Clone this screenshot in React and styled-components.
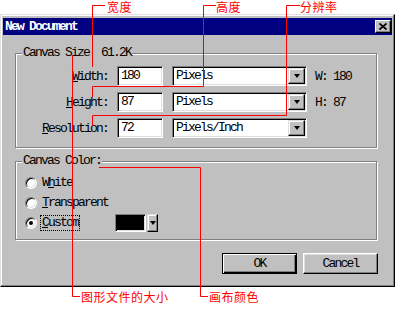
import styled, { createGlobalStyle } from 'styled-components';

const GlobalStyle = createGlobalStyle`
  html, body {
    margin: 0;
    padding: 0;
    background: #fff;
  }
`;

const Page = styled.div`
  position: relative;
  width: 396px;
  height: 309px;
  padding-top: 14px;
  box-sizing: border-box;
  overflow: hidden;
  font-family: "Liberation Mono", "Courier New", monospace;
  font-size: 13px;
  letter-spacing: -1.8px;
  color: #000;
`;

const Window = styled.div`
  width: 395px;
  height: 273px;
  box-sizing: border-box;
  background: #c0c0c0;
  border: 1px solid;
  border-color: #dfdfdf #000 #000 #dfdfdf;
  box-shadow: inset -1px -1px 0 #808080, inset 1px 1px 0 #fff;
  padding: 2px;
`;

const TitleBar = styled.div`
  margin-top: 1px;
  height: 17px;
  background: #000080;
  display: flex;
  align-items: center;
  justify-content: space-between;
  padding: 0 1px 0 2px;
  color: #fff;
  font-weight: bold;
`;

const CloseButton = styled.div`
  width: 16px;
  height: 13px;
  box-sizing: border-box;
  background: #c0c0c0;
  border: 1px solid;
  border-color: #fff #000 #000 #fff;
  box-shadow: inset -1px -1px 0 #808080;
  display: flex;
  align-items: center;
  justify-content: center;
`;

const Content = styled.div`
  padding: 18px 0 0 12px;
  display: flex;
  flex-direction: column;
`;

const GroupBox = styled.div`
  width: 362px;
  height: ${p => p.$h}px;
  margin-top: ${p => p.$mt || 0}px;
  box-sizing: border-box;
  border: 1px solid #808080;
  box-shadow: 1px 1px 0 #fff, inset 1px 1px 0 #fff;
  display: flex;
  flex-direction: column;
`;

const Legend = styled.div`
  align-self: flex-start;
  margin: -8px 0 0 6px;
  padding: 0 1px;
  background: #c0c0c0;
  line-height: 14px;
  white-space: pre;
`;

const FieldGrid = styled.div`
  display: grid;
  grid-template-columns: 92px 46px 135px auto;
  column-gap: 9px;
  row-gap: 6px;
  margin-top: 6px;
  align-items: center;
`;

const Label = styled.div`
  text-align: right;
  white-space: pre;
`;

const U = styled.span`
  text-decoration: underline;
`;

const Sunken = styled.div`
  height: ${p => p.$h || 20}px;
  box-sizing: border-box;
  background: ${p => p.$bg || '#fff'};
  border: 1px solid;
  border-color: #808080 #fff #fff #808080;
  box-shadow: inset 1px 1px 0 #000, inset -1px -1px 0 #dfdfdf;
  display: flex;
  align-items: stretch;
`;

const FieldText = styled.div`
  flex: 1;
  padding-left: 3px;
  line-height: 18px;
`;

const ArrowButton = styled.div`
  width: ${p => p.$w || 17}px;
  margin: 1px 1px 1px 0;
  box-sizing: border-box;
  background: #c0c0c0;
  border: 1px solid;
  border-color: #dfdfdf #000 #000 #dfdfdf;
  box-shadow: inset -1px -1px 0 #808080, inset 1px 1px 0 #fff;
  display: flex;
  align-items: center;
  justify-content: center;
  &::after {
    content: '';
    border-left: 3.5px solid transparent;
    border-right: 3.5px solid transparent;
    border-top: 4px solid #000;
  }
`;

const Info = styled.div`
  margin-left: -1px;
  white-space: pre;
`;

const RadioList = styled.div`
  display: flex;
  flex-direction: column;
  margin: 5px 0 0 9px;
`;

const RadioRow = styled.div`
  height: 20px;
  display: flex;
  align-items: center;
`;

const Radio = styled.span`
  width: 12px;
  height: 12px;
  box-sizing: border-box;
  border-radius: 50%;
  background: #fff;
  border: 1px solid;
  border-color: #808080 #fff #fff #808080;
  box-shadow: inset 1px 1px 0 #000, inset -1px -1px 0 #dfdfdf;
  display: flex;
  align-items: center;
  justify-content: center;
  &::after {
    content: '';
    width: 4px;
    height: 4px;
    border-radius: 50%;
    background: #000;
    display: ${p => (p.$checked ? 'block' : 'none')};
  }
`;

const RadioLabel = styled.span`
  margin-left: 3px;
  padding: 0 1px;
  line-height: 14px;
  border: 1px dotted ${p => (p.$focus ? '#000' : 'transparent')};
`;

const ColorPicker = styled.div`
  margin-left: 35px;
  display: flex;
  height: 18px;
`;

const Swatch = styled(Sunken)`
  width: 31px;
  background: #000;
`;

const SmallArrow = styled(ArrowButton)`
  margin: 0 0 0 1px;
`;

const ButtonRow = styled.div`
  width: 363px;
  margin-top: 13px;
  display: flex;
  justify-content: flex-end;
  gap: 6px;
`;

const Button = styled.div`
  width: 75px;
  height: 21px;
  box-sizing: border-box;
  display: flex;
  align-items: center;
  justify-content: center;
  background: #c0c0c0;
  border: 1px solid;
  border-color: ${p => (p.$default ? '#000' : '#fff #000 #000 #fff')};
  box-shadow: ${p =>
    p.$default
      ? 'inset 1px 1px 0 #fff, inset -1px -1px 0 #000, inset -2px -2px 0 #808080'
      : 'inset -1px -1px 0 #808080, inset 1px 1px 0 #dfdfdf'};
`;

const Overlay = styled.svg`
  position: absolute;
  left: 0;
  top: 0;
  width: 396px;
  height: 309px;
  pointer-events: none;
`;

const Note = styled.div`
  position: absolute;
  left: ${p => p.$x}px;
  top: ${p => p.$y}px;
  font-family: "Noto Sans CJK SC", sans-serif;
  font-size: 12px;
  line-height: 13px;
  letter-spacing: 0.5px;
  color: #f00;
  white-space: nowrap;
`;

const leaders = [
  '105,5.5 92.5,5.5 92.5,67',
  '216,5.5 203.5,5.5 203.5,86.5 92.5,86.5 92.5,97',
  '300,5.5 286.5,5.5 286.5,115.5 92.5,115.5 92.5,126',
  '72.5,55 72.5,296.5 80,296.5',
  '99,167.5 200.5,167.5 200.5,296.5 208,296.5',
];

const notes = [
  { x: 107, y: 0, text: '宽度' },
  { x: 216, y: 0, text: '高度' },
  { x: 300, y: 0, text: '分辨率' },
  { x: 81, y: 290, text: '图形文件的大小' },
  { x: 209, y: 290, text: '画布颜色' },
];

const Field = ({ value }) => (
  <Sunken>
    <FieldText>{value}</FieldText>
  </Sunken>
);

const Combo = ({ value }) => (
  <Sunken>
    <FieldText>{value}</FieldText>
    <ArrowButton />
  </Sunken>
);

const App = () => {
  return (
    <Page>
      <GlobalStyle />
      <Window>
        <TitleBar>
          <span>New Document</span>
          <CloseButton>
            <svg width="8" height="7" viewBox="0 0 8 7">
              <path d="M0.5 0.5 L7.5 6.5 M7.5 0.5 L0.5 6.5" stroke="#000" strokeWidth="1.7" />
            </svg>
          </CloseButton>
        </TitleBar>
        <Content>
          <GroupBox $h={95}>
            <Legend>Canvas Size  61.2K</Legend>
            <FieldGrid>
              <Label><U>W</U>idth:</Label>
              <Field value="180" />
              <Combo value="Pixels" />
              <Info>W: 180</Info>

              <Label><U>H</U>eight:</Label>
              <Field value="87" />
              <Combo value="Pixels" />
              <Info>H: 87</Info>

              <Label><U>R</U>esolution:</Label>
              <Field value="72" />
              <Combo value="Pixels/Inch" />
              <Info />
            </FieldGrid>
          </GroupBox>

          <GroupBox $h={79} $mt={13}>
            <Legend>Canvas Color:</Legend>
            <RadioList>
              <RadioRow>
                <Radio />
                <RadioLabel>W<U>h</U>ite</RadioLabel>
              </RadioRow>
              <RadioRow>
                <Radio />
                <RadioLabel><U>T</U>ransparent</RadioLabel>
              </RadioRow>
              <RadioRow>
                <Radio $checked />
                <RadioLabel $focus><U>C</U>ustom</RadioLabel>
                <ColorPicker>
                  <Swatch $h={18} />
                  <SmallArrow $w={11} />
                </ColorPicker>
              </RadioRow>
            </RadioList>
          </GroupBox>

          <ButtonRow>
            <Button $default>OK</Button>
            <Button>Cancel</Button>
          </ButtonRow>
        </Content>
      </Window>

      <Overlay viewBox="0 0 396 309">
        {leaders.map(points => (
          <polyline key={points} points={points} fill="none" stroke="#f00" strokeWidth="1" />
        ))}
      </Overlay>
      {notes.map(n => (
        <Note key={n.text} $x={n.x} $y={n.y}>{n.text}</Note>
      ))}
    </Page>
  );
};

export default App;
